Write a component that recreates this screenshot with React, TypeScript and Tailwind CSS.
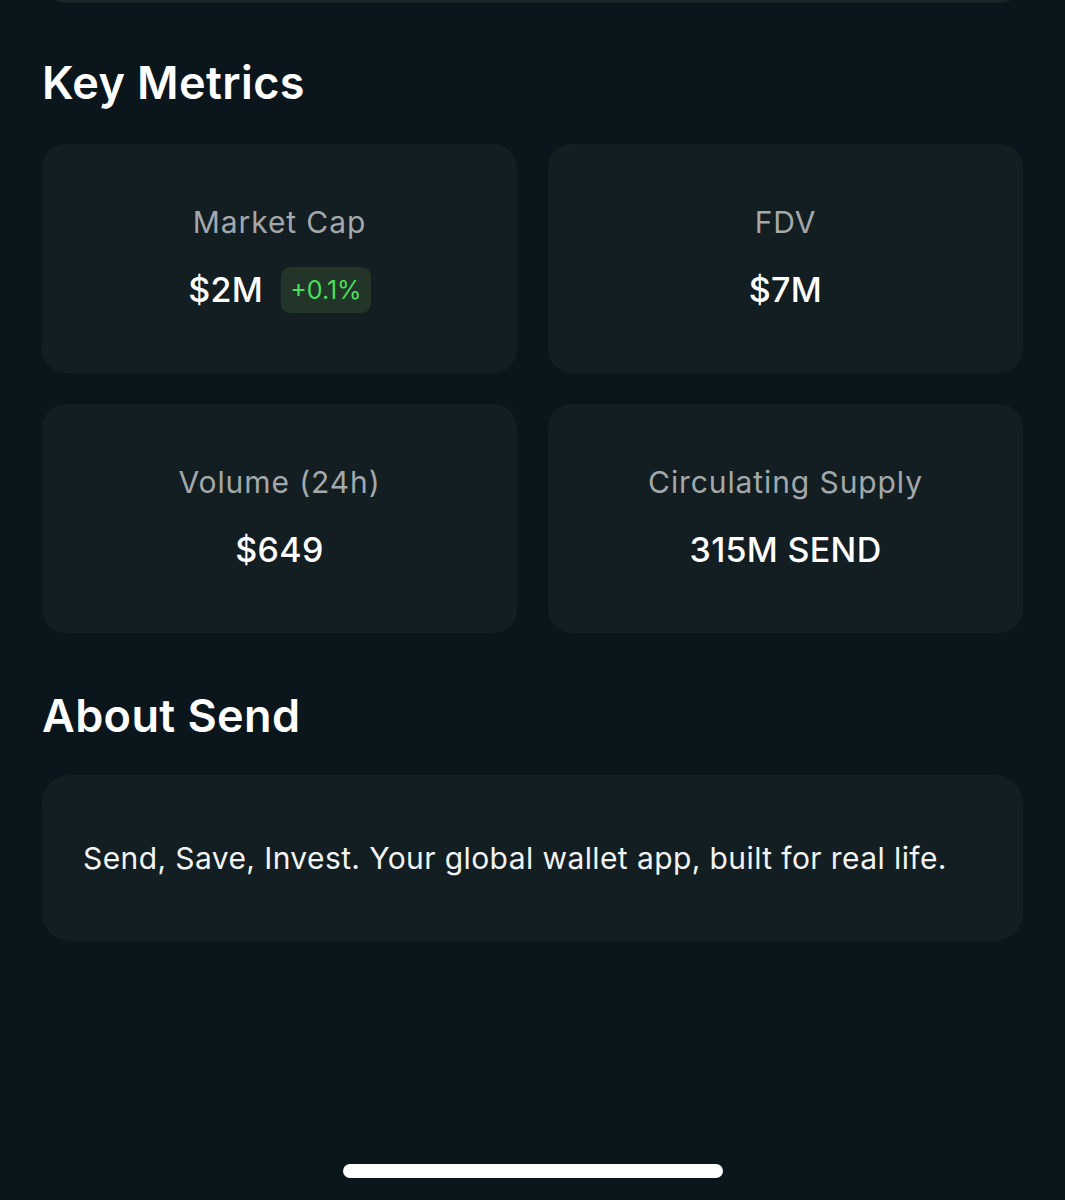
import React from "react";

const font = { fontFamily: "Inter, 'Noto Sans', sans-serif" };

function Metric({ label, value, badge }: { label: string; value: string; badge?: string }) {
  return (
    <div className="flex h-[229px] flex-col items-center justify-center gap-[27px] rounded-[24px] bg-[#131e22]">
      <div className="text-[30px] leading-[36px] tracking-[0.9px] text-[#a3a8aa]">{label}</div>
      <div className="flex h-[46px] items-center gap-[18px]">
        <span className="text-[34px] font-medium leading-[40px] tracking-[0.3px] text-white">{value}</span>
        {badge && (
          <span className="flex h-[46px] items-center rounded-[9px] bg-[#233428] px-[9px] text-[25px] leading-none text-[#4ade5c]">
            {badge}
          </span>
        )}
      </div>
    </div>
  );
}

export default function App() {
  return (
    <div style={font} className="relative h-[1200px] w-[1065px] overflow-hidden bg-[#0a161b] px-[42px]">
      <div className="h-[3px] overflow-hidden">
        <div className="-mt-[97px] h-[100px] rounded-[24px] bg-[#1b2529]" />
      </div>
      <h2 className="mt-[54px] text-[45px] font-semibold leading-[52px] tracking-[0.4px] text-white">Key Metrics</h2>
      <div className="mt-[35px] grid grid-cols-2 gap-[31px]">
        <Metric label="Market Cap" value="$2M" badge="+0.1%" />
        <Metric label="FDV" value="$7M" />
        <Metric label="Volume (24h)" value="$649" />
        <Metric label="Circulating Supply" value="315M SEND" />
      </div>
      <h2 className="mt-[57px] text-[45px] font-semibold leading-[52px] tracking-[0.4px] text-white">About Send</h2>
      <div className="mt-[33px] flex h-[166px] items-center rounded-[28px] bg-[#131e22] px-[41px]">
        <p className="text-[30px] leading-[36px] tracking-[0.4px] text-[#f2f4f4]">
          Send, Save, Invest. Your global wallet app, built for real life.
        </p>
      </div>
      <div className="absolute left-[343px] top-[1164px] h-[14px] w-[380px] rounded-full bg-white" />
    </div>
  );
}
